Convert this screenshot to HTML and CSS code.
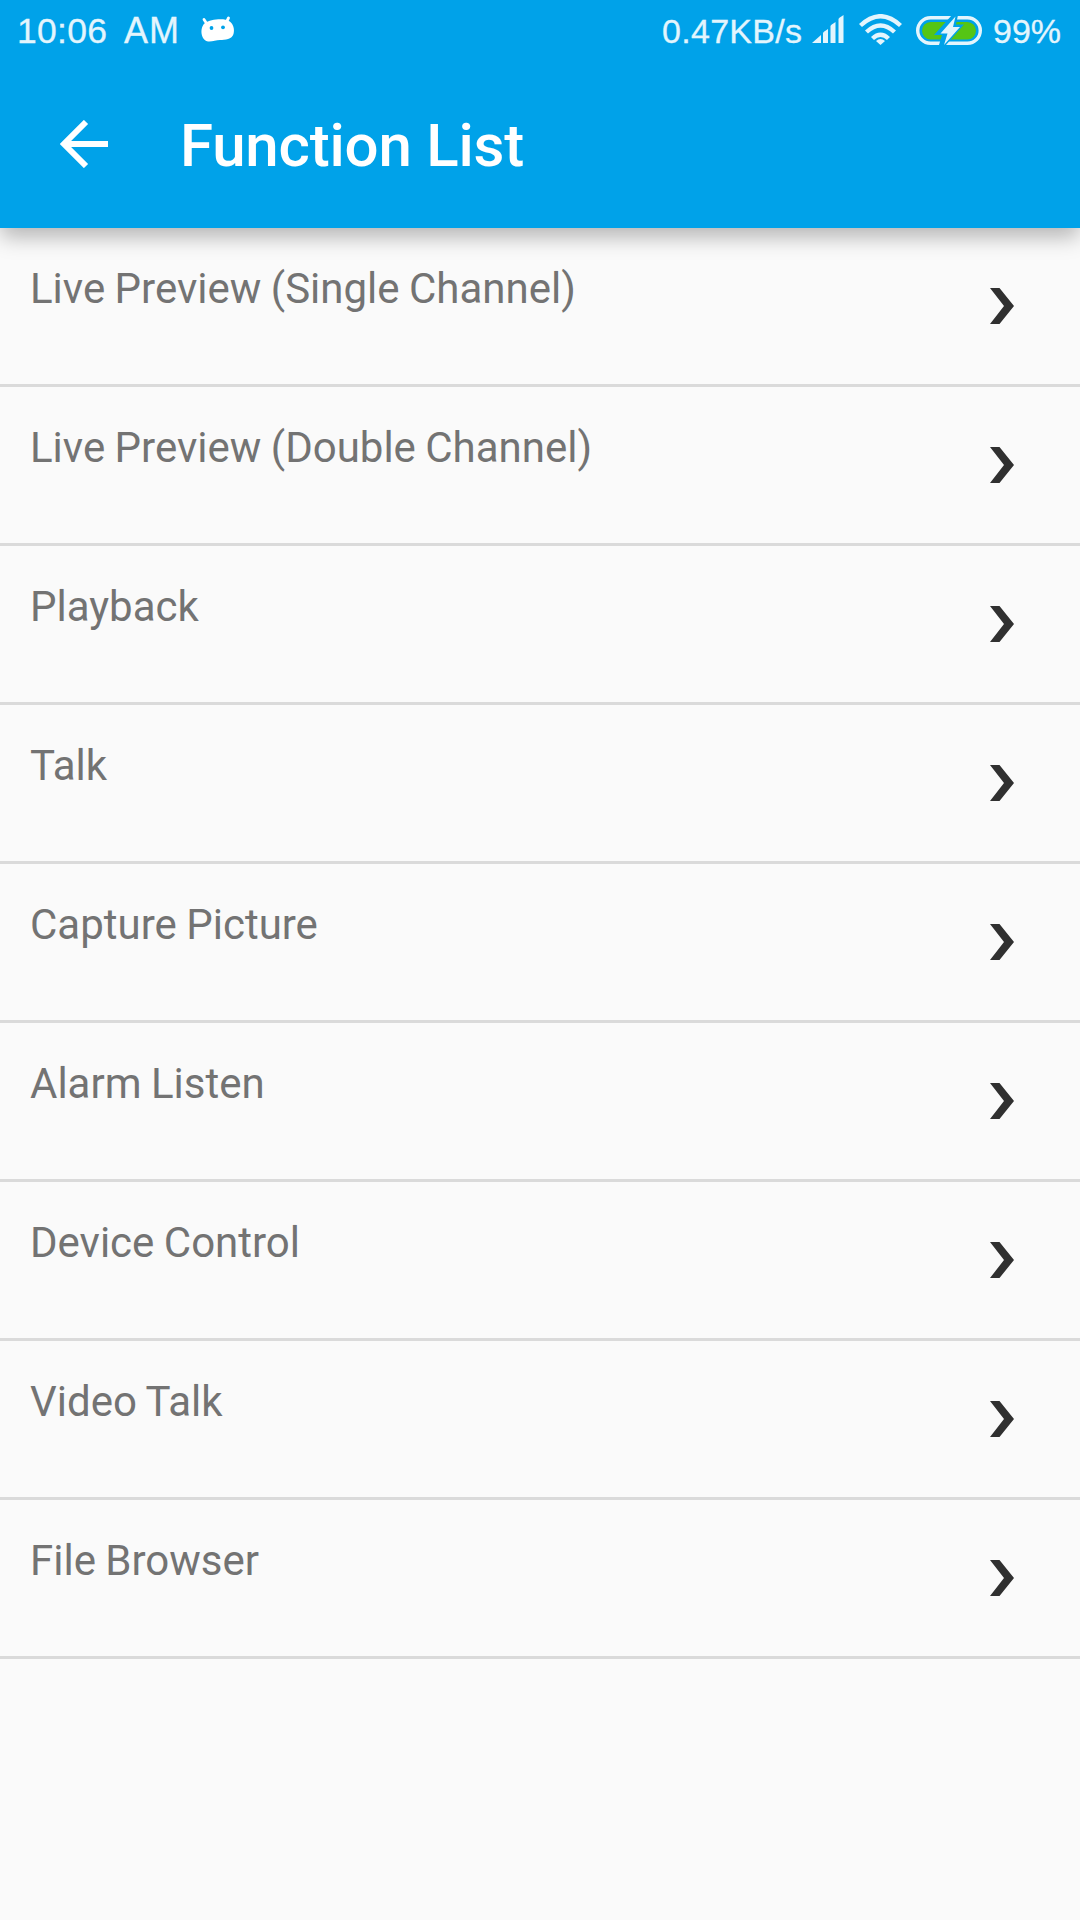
FILE: index.html
```html
<!DOCTYPE html>
<html lang="en">
<head>
<meta charset="utf-8">
<title>Function List</title>
<link rel="stylesheet" href="styles.css">
</head>
<body>
<header class="header">
  <div class="status">
    <span class="time">10:06</span>
    <span class="meridiem">AM</span>
    <svg class="android" width="36" height="28" viewBox="0 0 36 28">
      <path d="M4 3.500 7 8M28.500 2 26.500 6" stroke="#fff" stroke-width="2.800" stroke-linecap="round"/>
      <path d="M5 7C10 3 25 2 29 5C33 7 35 13 33.500 18C32 23.500 25 24 20 24C16 24 12 26 8 25.500C3 24.500 1 19 1.500 14C2 11 3 8.500 5 7Z" fill="#fff"/>
      <circle cx="11.500" cy="12" r="1.900" fill="#00a2e9"/><circle cx="23" cy="11.300" r="1.900" fill="#00a2e9"/>
    </svg>
    <span class="speed">0.47KB/s</span>
    <svg class="signal" width="32" height="29" viewBox="0 0 32 29" fill="#e3f5fd">
      <path d="M0 28 9 20v8H0zM11 18q0-1 5-4v14h-5zM18.500 11q0-1 5-4v21h-5zM26.500 4q0-1 5-4v28h-5z"/>
    </svg>
    <svg class="wifi" width="43" height="31" viewBox="0 0 43 31" fill="none" stroke="#e3f5fd" stroke-width="4.400">
      <path d="M1.500 11.500Q21.500-7 41.500 11.500M7.500 18Q21.500 5 35.500 18M13.500 24.500Q21.500 17 29.500 24.500"/>
      <path d="M17 27Q21.500 23 26 27L21.500 31Z" fill="#e3f5fd" stroke="none"/>
    </svg>
    <svg class="battery" width="66" height="30" viewBox="0 0 66 30">
      <rect x="1.700" y="2.700" width="62.600" height="25.600" rx="12.800" fill="none" stroke="#e3f5fd" stroke-width="3.400"/>
      <rect x="6" y="7" width="54" height="17.500" rx="8.700" fill="#55c514"/>
      <path d="M42 0 40 9.500H48L30 30H23L26 20H18L36 0Z" fill="#00a2e9"/>
      <path d="M39.500 1.500 37 12H44L28 30 31.500 18.500H24.500Z" fill="#e3f5fd"/>
    </svg>
    <span class="percent">99%</span>
  </div>
  <div class="toolbar">
    <svg class="back" width="48" height="48" viewBox="0 0 48 48" fill="none" stroke="#fff" stroke-width="6">
      <path d="M48 24H4M26 2 4 24 26 46"/>
    </svg>
    <h1 class="title">Function List</h1>
  </div>
</header>
<main class="list">
  <div class="row"><span>Live Preview (Single Channel)</span><svg class="chevron" viewBox="0 0 24 36"><path d="M0 0H9.500L24 18 9.500 36H0L14 18Z"/></svg></div>
  <div class="row"><span>Live Preview (Double Channel)</span><svg class="chevron" viewBox="0 0 24 36"><path d="M0 0H9.500L24 18 9.500 36H0L14 18Z"/></svg></div>
  <div class="row"><span>Playback</span><svg class="chevron" viewBox="0 0 24 36"><path d="M0 0H9.500L24 18 9.500 36H0L14 18Z"/></svg></div>
  <div class="row"><span>Talk</span><svg class="chevron" viewBox="0 0 24 36"><path d="M0 0H9.500L24 18 9.500 36H0L14 18Z"/></svg></div>
  <div class="row"><span>Capture Picture</span><svg class="chevron" viewBox="0 0 24 36"><path d="M0 0H9.500L24 18 9.500 36H0L14 18Z"/></svg></div>
  <div class="row"><span>Alarm Listen</span><svg class="chevron" viewBox="0 0 24 36"><path d="M0 0H9.500L24 18 9.500 36H0L14 18Z"/></svg></div>
  <div class="row"><span>Device Control</span><svg class="chevron" viewBox="0 0 24 36"><path d="M0 0H9.500L24 18 9.500 36H0L14 18Z"/></svg></div>
  <div class="row"><span>Video Talk</span><svg class="chevron" viewBox="0 0 24 36"><path d="M0 0H9.500L24 18 9.500 36H0L14 18Z"/></svg></div>
  <div class="row"><span>File Browser</span><svg class="chevron" viewBox="0 0 24 36"><path d="M0 0H9.500L24 18 9.500 36H0L14 18Z"/></svg></div>
</main>
</body>
</html>
```
FILE: styles.css
```css
* { box-sizing: border-box; }
body {
  margin: 0;
  min-height: 1920px;
  background: #fafafa;
  font-family: Roboto, sans-serif;
}
.header {
  height: 228px;
  background: #00a2e9;
  box-shadow: 0 10px 20px -1px rgba(0, 0, 0, 0.28);
}
.status {
  display: flex;
  align-items: flex-start;
  height: 60px;
  padding: 11px 19px 0 17px;
  color: #e3f5fd;
  font: 34px/40px "Liberation Sans", sans-serif;
  white-space: nowrap;
  -webkit-text-stroke: 0.3px #e3f5fd;
}
.time { width: 107px; font-size: 35.500px; letter-spacing: 0.3px; }
.meridiem { width: 76px; font-size: 36px; letter-spacing: 1px; }
.android { margin-top: 5px; }
.speed { margin-left: auto; width: 150px; letter-spacing: 0.3px; }
.signal { margin-top: 4px; }
.wifi { margin: 3px 0 0 15px; }
.battery { margin: 4px 0 0 14px; }
.percent { margin-left: 11px; width: 68px; }
.toolbar {
  display: flex;
  align-items: center;
  height: 168px;
  padding: 0 60px;
}
.title {
  margin: 4px 0 0 72px;
  color: #fff;
  font-size: 60px;
  font-weight: 500;
  line-height: 70px;
  letter-spacing: -0.2px;
}
.row {
  display: flex;
  justify-content: space-between;
  align-items: flex-start;
  height: 159px;
  padding: 36px 66px 0 30px;
  border-bottom: 3px solid #dadada;
  color: #737373;
  font-size: 42px;
  line-height: 49px;
  word-spacing: -1px;
}
.chevron {
  width: 24px;
  height: 36px;
  margin-top: 24px;
  fill: #303030;
}
```
